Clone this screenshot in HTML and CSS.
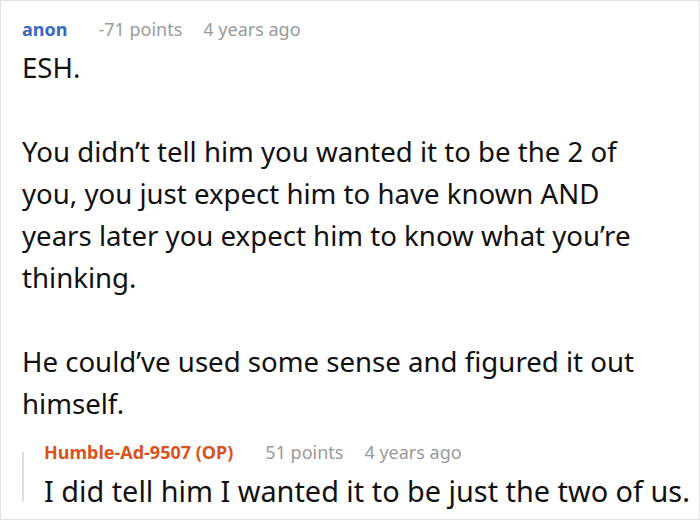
FILE: index.html
```html
<!DOCTYPE html>
<html>
<head>
<meta charset="utf-8">
<link rel="stylesheet" href="styles.css">
</head>
<body>
<div class="frame">
  <div class="comment">
    <div class="meta">
      <span class="author">anon</span>
      <span class="info">-71 points</span>
      <span class="info">4 years ago</span>
    </div>
    <div class="body main">
      <p>ESH.</p>
      <p>You didn’t tell him you wanted it to be the 2 of you, you just expect him to have known AND years later you expect him to know what you’re thinking.</p>
      <p>He could’ve used some sense and figured it out himself.</p>
    </div>
    <div class="reply">
      <div class="meta">
        <span class="author op">Humble-Ad-9507 (OP)</span>
        <span class="info">51 points</span>
        <span class="info">4 years ago</span>
      </div>
      <div class="body">
        <p>I did tell him I wanted it to be just the two of us.</p>
      </div>
    </div>
  </div>
</div>
</body>
</html>
```

FILE: styles.css
```css
html, body {
  margin: 0;
  padding: 0;
  background: #fff;
}
.frame {
  width: 700px;
  height: 520px;
  box-sizing: border-box;
  border: 1px solid #e2e2e2;
  overflow: hidden;
  font-family: "Noto Sans", "Open Sans", sans-serif;
  color: #111;
}
.comment {
  padding: 16px 0 0 21px;
}
.meta {
  display: flex;
  gap: 21px;
  font-size: 18px;
  line-height: 24px;
}
.author {
  font-weight: 700;
  color: #3a6abf;
  margin-right: 10px;
}
.author.op {
  color: #d8531d;
  margin-right: 11px;
}
.info {
  color: #9a9a9a;
}
.body {
  font-size: 28.85px;
  line-height: 42px;
  margin-top: 5px;
}
.body.main {
  width: 640px;
  font-size: 27.6px;
}
.body p {
  margin: 0 0 42px;
}
.body p:last-child {
  margin-bottom: 0;
}
.reply {
  position: relative;
  margin-top: 16px;
  padding-left: 22px;
}
.reply::before {
  content: "";
  position: absolute;
  left: 0;
  top: 12px;
  width: 2px;
  height: 50px;
  background: #e0e0e0;
}
.reply .body {
  margin-top: 6px;
}
```
